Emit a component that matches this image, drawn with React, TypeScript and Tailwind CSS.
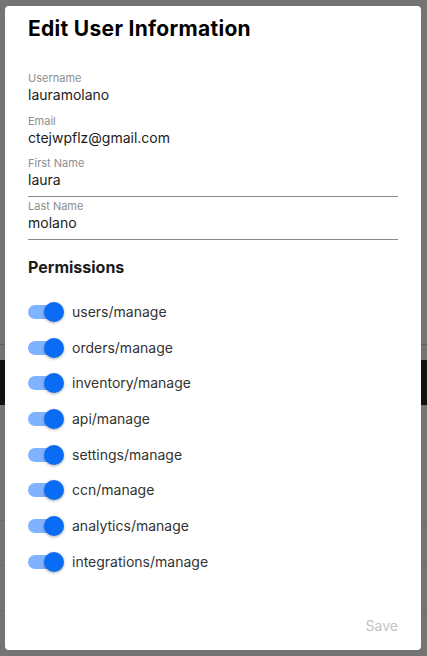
import React from "react"

const permissions = [
  "users/manage",
  "orders/manage",
  "inventory/manage",
  "api/manage",
  "settings/manage",
  "ccn/manage",
  "analytics/manage",
  "integrations/manage",
]

function Toggle() {
  return (
    <span className="relative inline-flex h-[20px] w-[36px] shrink-0 items-center">
      <span className="h-[14px] w-[34px] rounded-full bg-[#80b3ff]" />
      <span className="absolute right-0 top-0 h-[20px] w-[20px] rounded-full bg-[#0a6cf5] shadow-[0_1px_3px_rgba(0,0,0,0.35)]" />
    </span>
  )
}

function Field({
  label,
  value,
  underline,
  className = "",
}: {
  label: string
  value: string
  underline?: boolean
  className?: string
}) {
  return (
    <div className={`flex flex-col ${underline ? "border-b border-[#8a8a8a] pb-[6px]" : ""} ${className}`}>
      <span className="text-[11px] leading-[14px] text-[#8d8d8d]">{label}</span>
      <span className="text-[14px] leading-[20px] text-[#1c1c1c]">{value}</span>
    </div>
  )
}

export default function App() {
  return (
    <div
      className="relative h-[656px] w-[427px] overflow-hidden bg-[#747474]"
      style={{ fontFamily: "Inter, 'Noto Sans', sans-serif" }}
    >
      {/* dimmed page behind */}
      <div className="flex flex-col pt-[344px]">
        <div className="h-px bg-[#5e5e5e]" />
        <div className="mt-[15px] h-[45px] bg-[#111]" />
        <div className="mt-[115px] h-px bg-[#6a6a6a]" />
        <div className="mt-[44px] h-px bg-[#6a6a6a]" />
        <div className="mt-[44px] h-px bg-[#6a6a6a]" />
      </div>

      <div className="absolute left-[5px] top-[6px] flex h-[644px] w-[416px] flex-col rounded-[4px] bg-white px-[23px]">
        <h2 className="pt-[9px] text-[21px] font-bold leading-[28px] tracking-[0.3px] text-black">
          Edit User Information
        </h2>

        <div className="mt-[28px] flex flex-col">
          <Field label="Username" value="lauramolano" />
          <Field label="Email" value="ctejwpflz@gmail.com" className="mt-[9px]" />
          <Field label="First Name" value="laura" underline className="mt-[8px]" />
          <Field label="Last Name" value="molano" underline className="mt-[2px]" />
        </div>

        <h3 className="mt-[15px] text-[16px] font-bold leading-[24px] text-[#1c1c1c]">Permissions</h3>

        <div className="mt-[23px] flex flex-col gap-[15.7px]">
          {permissions.map((p) => (
            <div key={p} className="flex items-center gap-[8px]">
              <Toggle />
              <span className="text-[14px] leading-[20px] text-[#333]">{p}</span>
            </div>
          ))}
        </div>

        <div className="mt-auto flex justify-end pb-[14px]">
          <button className="text-[14px] leading-[20px] text-[#c4c4c4]">Save</button>
        </div>
      </div>
    </div>
  )
}
